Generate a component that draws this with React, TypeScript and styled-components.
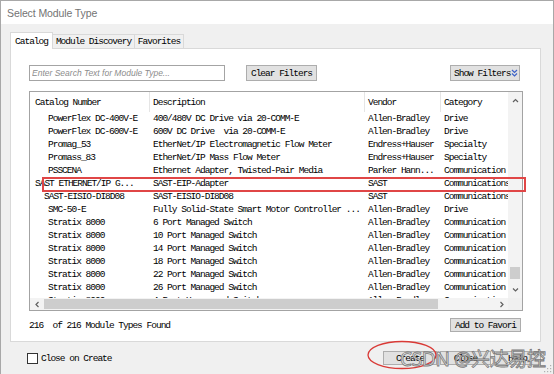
import React from "react";
import styled, { createGlobalStyle } from "styled-components";

const GlobalStyle = createGlobalStyle`
  html, body {
    margin: 0;
    padding: 0;
    background: #ffffff;
  }
  body {
    overflow: hidden;
  }
`;

const mono = `"Liberation Mono", "DejaVu Sans Mono", monospace`;

type Row = {
  cat: string;
  desc: string;
  vendor: string;
  category: string;
  indent: number;
};

const rows: Row[] = [
  { cat: "PowerFlex DC-400V-E", desc: "400/480V DC Drive via 20-COMM-E", vendor: "Allen-Bradley", category: "Drive", indent: 18 },
  { cat: "PowerFlex DC-600V-E", desc: "600V DC Drive  via 20-COMM-E", vendor: "Allen-Bradley", category: "Drive", indent: 18 },
  { cat: "Promag_53", desc: "EtherNet/IP Electromagnetic Flow Meter", vendor: "Endress+Hauser", category: "Specialty", indent: 18 },
  { cat: "Promass_83", desc: "EtherNet/IP Mass Flow Meter", vendor: "Endress+Hauser", category: "Specialty", indent: 18 },
  { cat: "PSSCENA", desc: "Ethernet Adapter, Twisted-Pair Media", vendor: "Parker Hann...", category: "Communication", indent: 18 },
  { cat: "SAST ETHERNET/IP G...", desc: "SAST-EIP-Adapter", vendor: "SAST", category: "Communications", indent: 5 },
  { cat: "SAST-EISIO-DI8D08", desc: "SAST-EISIO-DI8D08", vendor: "SAST", category: "Communications", indent: 14 },
  { cat: "SMC-50-E", desc: "Fully Solid-State Smart Motor Controller ...", vendor: "Allen-Bradley", category: "Drive", indent: 18 },
  { cat: "Stratix 8000", desc: "6 Port Managed Switch", vendor: "Allen-Bradley", category: "Communication", indent: 18 },
  { cat: "Stratix 8000", desc: "10 Port Managed Switch", vendor: "Allen-Bradley", category: "Communication", indent: 18 },
  { cat: "Stratix 8000", desc: "14 Port Managed Switch", vendor: "Allen-Bradley", category: "Communication", indent: 18 },
  { cat: "Stratix 8000", desc: "18 Port Managed Switch", vendor: "Allen-Bradley", category: "Communication", indent: 18 },
  { cat: "Stratix 8000", desc: "22 Port Managed Switch", vendor: "Allen-Bradley", category: "Communication", indent: 18 },
  { cat: "Stratix 8000", desc: "26 Port Managed Switch", vendor: "Allen-Bradley", category: "Communication", indent: 18 },
  { cat: "Stratix 8000", desc: "4 Port Unmanaged Switch", vendor: "Allen-Bradley", category: "Communication", indent: 18 },
];

const Window = styled.div`
  position: relative;
  width: 554px;
  height: 374px;
  box-sizing: border-box;
  border: 1px solid #a8a8a8;
  border-bottom: none;
  display: flex;
  flex-direction: column;
  background: #f0f0f0;
  font-family: ${mono};
  font-size: 9.5px;
  letter-spacing: -1px;
  color: #000;
  overflow: hidden;
`;

const TitleBar = styled.div`
  height: 23px;
  background: #ffffff;
  display: flex;
  align-items: center;
  padding-left: 6px;
  font-family: "Liberation Sans", Arial, sans-serif;
  font-size: 10.5px;
  letter-spacing: -0.1px;
  color: #737373;
`;

const Body = styled.div`
  flex: 1;
  display: flex;
  flex-direction: column;
  padding: 8px 12px 0 9px;
`;

const TabStrip = styled.div`
  height: 16px;
  display: flex;
  align-items: flex-end;
`;

const Tab = styled.div<{ $active?: boolean; $w: number }>`
  position: relative;
  z-index: 1;
  box-sizing: border-box;
  width: ${(p) => p.$w}px;
  height: ${(p) => (p.$active ? 17 : 14)}px;
  margin-bottom: ${(p) => (p.$active ? -1 : 0)}px;
  background: ${(p) => (p.$active ? "#ffffff" : "#f0f0f0")};
  border: 1px solid #d9d9d9;
  border-bottom: none;
  border-left: ${(p) => (p.$active ? "1px solid #d9d9d9" : "none")};
  display: flex;
  align-items: center;
  justify-content: center;
  color: #000;
`;

const Panel = styled.div`
  height: 294px;
  box-sizing: border-box;
  background: #ffffff;
  border: 1px solid #d9d9d9;
  padding: 16px 17px 0 18px;
  display: flex;
  flex-direction: column;
`;

const SearchRow = styled.div`
  height: 16px;
  display: flex;
`;

const SearchInput = styled.input`
  width: 196px;
  height: 16px;
  box-sizing: border-box;
  margin: 0;
  padding: 0 2px;
  border: 1px solid #a4a4a4;
  background: #fff;
  outline: none;
  font-family: "Liberation Sans", Arial, sans-serif;
  font-style: italic;
  font-size: 8.5px;
  letter-spacing: 0;
  &::placeholder {
    color: #8c8c8c;
  }
`;

const Button = styled.div<{ $w: number; $h?: number }>`
  width: ${(p) => p.$w}px;
  height: ${(p) => p.$h ?? 16}px;
  box-sizing: border-box;
  border: 1px solid #adadad;
  background: #e1e1e1;
  display: flex;
  align-items: center;
  justify-content: center;
  white-space: pre;
  color: #000;
`;

const ClearButton = styled(Button)`
  margin-left: 21px;
`;

const ShowFiltersButton = styled(Button)`
  margin-left: auto;
  margin-right: 3px;
  justify-content: flex-start;
  padding-left: 3px;
  gap: 1px;
`;

const FavButton = styled(Button)`
  margin-right: 2px;
`;

const Table = styled.div`
  margin-top: 10px;
  height: 220px;
  box-sizing: border-box;
  border: 1px solid #a3a3a3;
  display: grid;
  grid-template-columns: 1fr 14px;
  grid-template-rows: 1fr 12px;
`;

const ListArea = styled.div`
  overflow: hidden;
  background: #fff;
`;

const columns = "119px 215px 76px 68px";

const HeaderRow = styled.div`
  height: 20px;
  display: grid;
  grid-template-columns: ${columns};
`;

const HeaderCell = styled.div<{ $first?: boolean }>`
  display: flex;
  align-items: center;
  padding-left: ${(p) => (p.$first ? 5 : 3)}px;
  border-left: ${(p) => (p.$first ? "none" : "1px solid #e5e5e5")};
  white-space: nowrap;
`;

const DataRow = styled.div`
  height: 13px;
  line-height: 13px;
  display: grid;
  grid-template-columns: ${columns};
  white-space: pre;
`;

const Cell = styled.div<{ $pad: number }>`
  padding-left: ${(p) => p.$pad}px;
`;

const VScroll = styled.div`
  background: #f3f3f3;
  display: flex;
  flex-direction: column;
`;

const ArrowBox = styled.div<{ $w?: number; $h?: number }>`
  width: ${(p) => (p.$w ? `${p.$w}px` : "auto")};
  height: ${(p) => (p.$h ? `${p.$h}px` : "auto")};
  flex-shrink: 0;
  display: flex;
  align-items: center;
  justify-content: center;
`;

const VTrack = styled.div`
  flex: 1;
  display: flex;
  flex-direction: column;
  align-items: center;
`;

const VThumb = styled.div<{ $offset: number }>`
  margin-top: ${(p) => p.$offset}px;
  width: 10px;
  height: 12px;
  background: #cdcdcd;
`;

const HScroll = styled.div`
  background: #f3f3f3;
  display: flex;
  align-items: stretch;
`;

const HThumb = styled.div<{ $w: number }>`
  width: ${(p) => p.$w}px;
  margin: 1px 0;
  background: #cdcdcd;
`;

const HTrack = styled.div`
  flex: 1;
`;

const Corner = styled.div`
  background: #f0f0f0;
`;

const Footer = styled.div`
  margin-top: 7px;
  height: 14px;
  display: flex;
  align-items: center;
  justify-content: space-between;
`;

const CountText = styled.span`
  white-space: pre;
`;

const BottomBar = styled.div`
  flex: 1;
  display: flex;
  align-items: center;
  padding-left: 17px;
`;

const CheckBox = styled.div`
  width: 11px;
  height: 11px;
  box-sizing: border-box;
  border: 1px solid #333;
  background: #fff;
`;

const CheckLabel = styled.span`
  margin-left: 3px;
`;

const ButtonGroup = styled.div`
  margin-left: auto;
  display: flex;
  gap: 3px;
`;

const Highlight = styled.div`
  position: absolute;
  left: 41px;
  top: 176px;
  width: 484px;
  height: 15px;
  box-sizing: border-box;
  border: 2px solid #e04646;
`;

const Circle = styled.svg`
  position: absolute;
  left: 365px;
  top: 339px;
`;

const Watermark = styled.div`
  position: absolute;
  left: 399px;
  top: 343px;
  font-family: "Noto Sans", "Noto Sans CJK SC", sans-serif;
  font-size: 19px;
  letter-spacing: -0.3px;
  color: rgba(235, 235, 235, 0.9);
  -webkit-text-stroke: 0.8px rgba(100, 100, 100, 0.85);
  white-space: nowrap;
`;

const Grip = styled.svg`
  position: absolute;
  right: 1px;
  bottom: 1px;
`;

type Dir = "up" | "down" | "left" | "right";

const chevronPts: Record<Dir, string> = {
  up: "1,5 3.5,2.5 6,5",
  down: "1,2.5 3.5,5 6,2.5",
  left: "4.5,1 2,3.5 4.5,6",
  right: "2.5,1 5,3.5 2.5,6",
};

const Chevron = ({ dir }: { dir: Dir }) => (
  <svg width="7" height="7" viewBox="0 0 7 7">
    <polyline points={chevronPts[dir]} fill="none" stroke="#606060" strokeWidth="1.2" />
  </svg>
);

const DoubleDown = () => (
  <svg width="7" height="8" viewBox="0 0 7 8">
    <polyline points="1,1 3.5,3.5 6,1" fill="none" stroke="#3d63c9" strokeWidth="1.2" />
    <polyline points="1,4.5 3.5,7 6,4.5" fill="none" stroke="#3d63c9" strokeWidth="1.2" />
  </svg>
);

export default function App() {
  return (
    <>
      <GlobalStyle />
      <Window>
        <TitleBar>Select Module Type</TitleBar>
        <Body>
          <TabStrip>
            <Tab $active $w={43}>Catalog</Tab>
            <Tab $w={82}>Module Discovery</Tab>
            <Tab $w={49}>Favorites</Tab>
          </TabStrip>
          <Panel>
            <SearchRow>
              <SearchInput placeholder="Enter Search Text for Module Type..." readOnly />
              <ClearButton $w={71}>Clear Filters</ClearButton>
              <ShowFiltersButton $w={70}>
                Show Filters
                <DoubleDown />
              </ShowFiltersButton>
            </SearchRow>

            <Table>
              <ListArea>
                <HeaderRow>
                  <HeaderCell $first>Catalog Number</HeaderCell>
                  <HeaderCell>Description</HeaderCell>
                  <HeaderCell>Vendor</HeaderCell>
                  <HeaderCell>Category</HeaderCell>
                </HeaderRow>
                {rows.map((r, i) => (
                  <DataRow key={i}>
                    <Cell $pad={r.indent}>{r.cat}</Cell>
                    <Cell $pad={4}>{r.desc}</Cell>
                    <Cell $pad={4}>{r.vendor}</Cell>
                    <Cell $pad={4}>{r.category}</Cell>
                  </DataRow>
                ))}
              </ListArea>
              <VScroll>
                <ArrowBox $h={17}>
                  <Chevron dir="up" />
                </ArrowBox>
                <VTrack>
                  <VThumb $offset={158} />
                </VTrack>
                <ArrowBox $h={17}>
                  <Chevron dir="down" />
                </ArrowBox>
              </VScroll>
              <HScroll>
                <ArrowBox $w={14}>
                  <Chevron dir="left" />
                </ArrowBox>
                <HThumb $w={394} />
                <HTrack />
                <ArrowBox $w={14}>
                  <Chevron dir="right" />
                </ArrowBox>
              </HScroll>
              <Corner />
            </Table>

            <Footer>
              <CountText>216  of 216 Module Types Found</CountText>
              <FavButton $w={71} $h={14}>
                Add to Favori
              </FavButton>
            </Footer>
          </Panel>

          <BottomBar>
            <CheckBox />
            <CheckLabel>Close on Create</CheckLabel>
            <ButtonGroup>
              <Button $w={54} $h={14}>Create</Button>
              <Button $w={51} $h={14}>Close</Button>
              <Button $w={47} $h={14}>Help</Button>
            </ButtonGroup>
          </BottomBar>
        </Body>

        <Highlight />
        <Circle width="72" height="30" viewBox="0 0 72 30">
          <ellipse cx="36" cy="15" rx="34" ry="13.5" fill="none" stroke="#d93a36" strokeWidth="1.3" />
        </Circle>
        <Watermark>CSDN @兴达易控</Watermark>
        <Grip width="8" height="8" viewBox="0 0 8 8">
          <rect x="6" y="0" width="1.2" height="1.2" fill="#b0b0b0" />
          <rect x="3" y="3" width="1.2" height="1.2" fill="#b0b0b0" />
          <rect x="6" y="3" width="1.2" height="1.2" fill="#b0b0b0" />
          <rect x="0" y="6" width="1.2" height="1.2" fill="#b0b0b0" />
          <rect x="3" y="6" width="1.2" height="1.2" fill="#b0b0b0" />
          <rect x="6" y="6" width="1.2" height="1.2" fill="#b0b0b0" />
        </Grip>
      </Window>
    </>
  );
}
